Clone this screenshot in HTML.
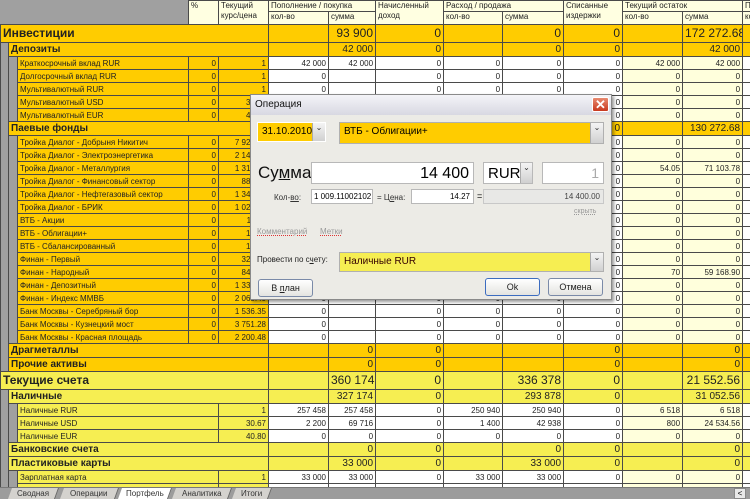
<!DOCTYPE html>
<html><head><meta charset="utf-8">
<style>
*{box-sizing:border-box}
body{margin:0;width:750px;height:499px;overflow:hidden;background:#a0a0a0;font-family:"Liberation Sans",sans-serif;position:relative}
table{position:absolute;left:0;top:0;border-collapse:collapse;table-layout:fixed;width:750px}
td{border:1px solid #4a4a4a;padding:0 2px;font-size:8px;white-space:nowrap;overflow:hidden;height:13px;line-height:11px;color:#222}
td.r{text-align:right}
.g{background:#a0a0a0;border-top:none;border-bottom:none}
.y{background:#ffcc00}
.z{background:#f6ee52}
.w{background:#fff}
.l{background:#ffffdc}
.h{background:#ffffe1;vertical-align:top;line-height:10px;height:10px}
.hg{background:#a0a0a0;border:none}
tr.l1 td{height:14px;font-size:10px;font-weight:bold}
tr.l1 td.r{font-weight:normal}
tr.l0 td{height:18px;font-size:12px;font-weight:bold}
tr.l0 td.r{font-weight:normal}
.dlg{position:absolute;left:250px;top:94px;width:362px;height:206px;background:#ecebe6;border:1px solid #8a8a8a;box-shadow:2px 2px 3px rgba(0,0,0,.4)}
.dlg div{white-space:nowrap}
.tb{position:absolute;left:0;top:0;width:360px;height:20px;background:linear-gradient(#f4f4f8,#d8d8e2);font-size:10px;padding:4px 4px;color:#111}
.x{position:absolute;right:2px;top:2px;width:17px;height:15px;background:linear-gradient(#e88a70,#c8381e);border:1px solid #fff;border-radius:2px;color:#fff;font-size:13px;line-height:13px;text-align:center;font-weight:bold}
.a{position:absolute}
.cb{position:absolute;border:1px solid #b0b0b0;font-size:10px;padding:3px 4px}
.dd{position:absolute;right:0;top:0;bottom:0;width:13px;background:linear-gradient(#f4f4f4,#d0d0d0);border-left:1px solid #aaa;font-size:8px;text-align:center;color:#333}
.in{position:absolute;background:#fff;border:1px solid #b8b8b8}
.bt{position:absolute;height:18px;border:1px solid #7a8aa8;border-radius:3px;background:linear-gradient(#fff,#e4e4e0);font-size:9px;text-align:center;line-height:16px;color:#222}
.tabs{position:absolute;left:0;top:487px;width:750px;height:12px;background:#9c9c9c;border-top:1px solid #777}
.tab{position:absolute;top:0;height:11px;background:#d4d2ce;font-size:8px;line-height:11px;text-align:center;color:#333;border-right:1px solid #666;transform:skewX(-20deg)}
.tab span{display:inline-block;transform:skewX(20deg)}
</style></head><body>
<table>
<colgroup><col style="width:8px"><col style="width:9px"><col style="width:171px"><col style="width:30px"><col style="width:50px"><col style="width:60px"><col style="width:47px"><col style="width:68px"><col style="width:59px"><col style="width:61px"><col style="width:59px"><col style="width:60px"><col style="width:60px"><col style="width:8px"></colgroup>
<tr><td class="hg" colspan="3" rowspan="2"></td><td class="h" rowspan="2">%</td><td class="h" rowspan="2">Текущий<br>курс/цена</td><td class="h" colspan="2">Пополнение / покупка</td><td class="h" rowspan="2">Начисленный<br>доход</td><td class="h" colspan="2">Расход / продажа</td><td class="h" rowspan="2">Списанные<br>издержки</td><td class="h" colspan="2">Текущий остаток</td><td class="h">П</td></tr>
<tr><td class="h" style="height:13px">кол-во</td><td class="h">сумма</td><td class="h">кол-во</td><td class="h">сумма</td><td class="h">кол-во</td><td class="h">сумма</td><td class="h">ко</td></tr>

<tr class="l0"><td class="y" colspan="5">Инвестиции</td><td class="y"></td><td class="y r">93 900</td><td class="y r">0</td><td class="y"></td><td class="y r">0</td><td class="y r">0</td><td class="y"></td><td class="y r">172 272.68</td><td class="y"></td></tr>
<tr class="l1"><td class="g"></td><td class="y" colspan="4">Депозиты</td><td class="y"></td><td class="y r">42 000</td><td class="y r">0</td><td class="y"></td><td class="y r">0</td><td class="y r">0</td><td class="y"></td><td class="y r">42 000</td><td class="y"></td></tr>
<tr><td class="g"></td><td class="g"></td><td class="y">Краткосрочный вклад RUR</td><td class="y r">0</td><td class="y r">1</td><td class="w r">42 000</td><td class="w r">42 000</td><td class="w r">0</td><td class="w r">0</td><td class="w r">0</td><td class="w r">0</td><td class="l r">42 000</td><td class="l r">42 000</td><td class="w"></td></tr>
<tr><td class="g"></td><td class="g"></td><td class="y">Долгосрочный вклад RUR</td><td class="y r">0</td><td class="y r">1</td><td class="w r">0</td><td class="w"></td><td class="w r">0</td><td class="w r">0</td><td class="w r">0</td><td class="w r">0</td><td class="l r">0</td><td class="l r">0</td><td class="w"></td></tr>
<tr><td class="g"></td><td class="g"></td><td class="y">Мультивалютный RUR</td><td class="y r">0</td><td class="y r">1</td><td class="w r">0</td><td class="w"></td><td class="w r">0</td><td class="w r">0</td><td class="w r">0</td><td class="w r">0</td><td class="l r">0</td><td class="l r">0</td><td class="w"></td></tr>
<tr><td class="g"></td><td class="g"></td><td class="y">Мультивалютный USD</td><td class="y r">0</td><td class="y r">30.67</td><td class="w r">0</td><td class="w"></td><td class="w r">0</td><td class="w r">0</td><td class="w r">0</td><td class="w r">0</td><td class="l r">0</td><td class="l r">0</td><td class="w"></td></tr>
<tr><td class="g"></td><td class="g"></td><td class="y">Мультивалютный EUR</td><td class="y r">0</td><td class="y r">40.80</td><td class="w r">0</td><td class="w"></td><td class="w r">0</td><td class="w r">0</td><td class="w r">0</td><td class="w r">0</td><td class="l r">0</td><td class="l r">0</td><td class="w"></td></tr>
<tr class="l1"><td class="g"></td><td class="y" colspan="4">Паевые фонды</td><td class="y"></td><td class="y r">51 900</td><td class="y r">0</td><td class="y"></td><td class="y r">0</td><td class="y r">0</td><td class="y"></td><td class="y r">130 272.68</td><td class="y"></td></tr>
<tr><td class="g"></td><td class="g"></td><td class="y">Тройка Диалог - Добрыня Никитич</td><td class="y r">0</td><td class="y r">7 921.42</td><td class="w r">0</td><td class="w"></td><td class="w r">0</td><td class="w r">0</td><td class="w r">0</td><td class="w r">0</td><td class="l r">0</td><td class="l r">0</td><td class="w"></td></tr>
<tr><td class="g"></td><td class="g"></td><td class="y">Тройка Диалог - Электроэнергетика</td><td class="y r">0</td><td class="y r">2 145.10</td><td class="w r">0</td><td class="w"></td><td class="w r">0</td><td class="w r">0</td><td class="w r">0</td><td class="w r">0</td><td class="l r">0</td><td class="l r">0</td><td class="w"></td></tr>
<tr><td class="g"></td><td class="g"></td><td class="y">Тройка Диалог - Металлургия</td><td class="y r">0</td><td class="y r">1 315.50</td><td class="w r">0</td><td class="w"></td><td class="w r">0</td><td class="w r">0</td><td class="w r">0</td><td class="w r">0</td><td class="l r">54.05</td><td class="l r">71 103.78</td><td class="w"></td></tr>
<tr><td class="g"></td><td class="g"></td><td class="y">Тройка Диалог - Финансовый сектор</td><td class="y r">0</td><td class="y r">885.20</td><td class="w r">0</td><td class="w"></td><td class="w r">0</td><td class="w r">0</td><td class="w r">0</td><td class="w r">0</td><td class="l r">0</td><td class="l r">0</td><td class="w"></td></tr>
<tr><td class="g"></td><td class="g"></td><td class="y">Тройка Диалог - Нефтегазовый сектор</td><td class="y r">0</td><td class="y r">1 345.60</td><td class="w r">0</td><td class="w"></td><td class="w r">0</td><td class="w r">0</td><td class="w r">0</td><td class="w r">0</td><td class="l r">0</td><td class="l r">0</td><td class="w"></td></tr>
<tr><td class="g"></td><td class="g"></td><td class="y">Тройка Диалог - БРИК</td><td class="y r">0</td><td class="y r">1 025.30</td><td class="w r">0</td><td class="w"></td><td class="w r">0</td><td class="w r">0</td><td class="w r">0</td><td class="w r">0</td><td class="l r">0</td><td class="l r">0</td><td class="w"></td></tr>
<tr><td class="g"></td><td class="g"></td><td class="y">ВТБ - Акции</td><td class="y r">0</td><td class="y r">11.40</td><td class="w r">0</td><td class="w"></td><td class="w r">0</td><td class="w r">0</td><td class="w r">0</td><td class="w r">0</td><td class="l r">0</td><td class="l r">0</td><td class="w"></td></tr>
<tr><td class="g"></td><td class="g"></td><td class="y">ВТБ - Облигации+</td><td class="y r">0</td><td class="y r">14.27</td><td class="w r">0</td><td class="w"></td><td class="w r">0</td><td class="w r">0</td><td class="w r">0</td><td class="w r">0</td><td class="l r">0</td><td class="l r">0</td><td class="w"></td></tr>
<tr><td class="g"></td><td class="g"></td><td class="y">ВТБ - Сбалансированный</td><td class="y r">0</td><td class="y r">12.80</td><td class="w r">0</td><td class="w"></td><td class="w r">0</td><td class="w r">0</td><td class="w r">0</td><td class="w r">0</td><td class="l r">0</td><td class="l r">0</td><td class="w"></td></tr>
<tr><td class="g"></td><td class="g"></td><td class="y">Финан - Первый</td><td class="y r">0</td><td class="y r">321.45</td><td class="w r">0</td><td class="w"></td><td class="w r">0</td><td class="w r">0</td><td class="w r">0</td><td class="w r">0</td><td class="l r">0</td><td class="l r">0</td><td class="w"></td></tr>
<tr><td class="g"></td><td class="g"></td><td class="y">Финан - Народный</td><td class="y r">0</td><td class="y r">845.27</td><td class="w r">0</td><td class="w"></td><td class="w r">0</td><td class="w r">0</td><td class="w r">0</td><td class="w r">0</td><td class="l r">70</td><td class="l r">59 168.90</td><td class="w"></td></tr>
<tr><td class="g"></td><td class="g"></td><td class="y">Финан - Депозитный</td><td class="y r">0</td><td class="y r">1 330.10</td><td class="w r">0</td><td class="w"></td><td class="w r">0</td><td class="w r">0</td><td class="w r">0</td><td class="w r">0</td><td class="l r">0</td><td class="l r">0</td><td class="w"></td></tr>
<tr><td class="g"></td><td class="g"></td><td class="y">Финан - Индекс ММВБ</td><td class="y r">0</td><td class="y r">2 065.40</td><td class="w r">0</td><td class="w"></td><td class="w r">0</td><td class="w r">0</td><td class="w r">0</td><td class="w r">0</td><td class="l r">0</td><td class="l r">0</td><td class="w"></td></tr>
<tr><td class="g"></td><td class="g"></td><td class="y">Банк Москвы - Серебряный бор</td><td class="y r">0</td><td class="y r">1 536.35</td><td class="w r">0</td><td class="w"></td><td class="w r">0</td><td class="w r">0</td><td class="w r">0</td><td class="w r">0</td><td class="l r">0</td><td class="l r">0</td><td class="w"></td></tr>
<tr><td class="g"></td><td class="g"></td><td class="y">Банк Москвы - Кузнецкий мост</td><td class="y r">0</td><td class="y r">3 751.28</td><td class="w r">0</td><td class="w"></td><td class="w r">0</td><td class="w r">0</td><td class="w r">0</td><td class="w r">0</td><td class="l r">0</td><td class="l r">0</td><td class="w"></td></tr>
<tr><td class="g"></td><td class="g"></td><td class="y">Банк Москвы - Красная площадь</td><td class="y r">0</td><td class="y r">2 200.48</td><td class="w r">0</td><td class="w"></td><td class="w r">0</td><td class="w r">0</td><td class="w r">0</td><td class="w r">0</td><td class="l r">0</td><td class="l r">0</td><td class="w"></td></tr>
<tr class="l1"><td class="g"></td><td class="y" colspan="4">Драгметаллы</td><td class="y"></td><td class="y r">0</td><td class="y r">0</td><td class="y"></td><td class="y r"></td><td class="y r">0</td><td class="y"></td><td class="y r">0</td><td class="y"></td></tr>
<tr class="l1"><td class="g"></td><td class="y" colspan="4">Прочие активы</td><td class="y"></td><td class="y r">0</td><td class="y r">0</td><td class="y"></td><td class="y r"></td><td class="y r">0</td><td class="y"></td><td class="y r">0</td><td class="y"></td></tr>

<tr class="l0"><td class="z" colspan="5">Текущие счета</td><td class="z"></td><td class="z r">360 174</td><td class="z r">0</td><td class="z"></td><td class="z r">336 378</td><td class="z r">0</td><td class="z"></td><td class="z r">21 552.56</td><td class="z"></td></tr>
<tr class="l1"><td class="g"></td><td class="z" colspan="4">Наличные</td><td class="z"></td><td class="z r">327 174</td><td class="z r">0</td><td class="z"></td><td class="z r">293 878</td><td class="z r">0</td><td class="z"></td><td class="z r">31 052.56</td><td class="z"></td></tr>
<tr><td class="g"></td><td class="g"></td><td class="z" colspan="2">Наличные RUR</td><td class="z r">1</td><td class="w r">257 458</td><td class="w r">257 458</td><td class="w r">0</td><td class="w r">250 940</td><td class="w r">250 940</td><td class="w r">0</td><td class="l r">6 518</td><td class="l r">6 518</td><td class="w"></td></tr>
<tr><td class="g"></td><td class="g"></td><td class="z" colspan="2">Наличные USD</td><td class="z r">30.67</td><td class="w r">2 200</td><td class="w r">69 716</td><td class="w r">0</td><td class="w r">1 400</td><td class="w r">42 938</td><td class="w r">0</td><td class="l r">800</td><td class="l r">24 534.56</td><td class="w"></td></tr>
<tr><td class="g"></td><td class="g"></td><td class="z" colspan="2">Наличные EUR</td><td class="z r">40.80</td><td class="w r">0</td><td class="w r">0</td><td class="w r">0</td><td class="w r">0</td><td class="w r">0</td><td class="w r">0</td><td class="l r">0</td><td class="l r">0</td><td class="w"></td></tr>
<tr class="l1"><td class="g"></td><td class="z" colspan="4">Банковские счета</td><td class="z"></td><td class="z r">0</td><td class="z r">0</td><td class="z"></td><td class="z r">0</td><td class="z r">0</td><td class="z"></td><td class="z r">0</td><td class="z"></td></tr>
<tr class="l1"><td class="g"></td><td class="z" colspan="4">Пластиковые карты</td><td class="z"></td><td class="z r">33 000</td><td class="z r">0</td><td class="z"></td><td class="z r">33 000</td><td class="z r">0</td><td class="z"></td><td class="z r">0</td><td class="z"></td></tr>
<tr><td class="g"></td><td class="g"></td><td class="z" colspan="2">Зарплатная карта</td><td class="z r">1</td><td class="w r">33 000</td><td class="w r">33 000</td><td class="w r">0</td><td class="w r">33 000</td><td class="w r">33 000</td><td class="w r">0</td><td class="l r">0</td><td class="l r">0</td><td class="w"></td></tr>
<tr><td class="g"></td><td class="g"></td><td class="z" colspan="2"></td><td class="z r"></td><td class="w"></td><td class="w"></td><td class="w"></td><td class="w"></td><td class="w"></td><td class="w"></td><td class="l"></td><td class="l"></td><td class="w"></td></tr>
</table>

<div class="dlg">
 <div class="tb">Операция<div class="x">✕</div></div>
 <div class="cb" style="left:6px;top:27px;width:69px;height:20px;background:#ffcc00;border-color:#fff">31.10.2010<div class="dd">⌄</div></div>
 <div class="cb" style="left:88px;top:27px;width:265px;height:22px;background:#ffcc00">ВТБ - Облигации+<div class="dd">⌄</div></div>
 <div class="a" style="left:7px;top:68px;font-size:17px;color:#111">Су<u>м</u>ма:</div>
 <div class="in" style="left:60px;top:67px;width:163px;height:22px;font-size:16px;text-align:right;padding:2px 4px">14 400</div>
 <div class="in" style="left:232px;top:67px;width:50px;height:22px;font-size:15px;padding:2px 4px">RUR<div class="dd" style="width:12px">⌄</div></div>
 <div class="in" style="left:291px;top:67px;width:62px;height:22px;font-size:14px;text-align:right;padding:2px 4px;color:#aaa">1</div>
 <div class="a" style="left:23px;top:98px;font-size:8px;color:#333">Кол-<u>во</u>:</div>
 <div class="in" style="left:60px;top:94px;width:62px;height:15px;font-size:8px;padding:2px 2px;overflow:hidden">1 009.11002102</div>
 <div class="a" style="left:126px;top:98px;font-size:8px;color:#333">= Ц<u>е</u>на:</div>
 <div class="in" style="left:160px;top:94px;width:63px;height:15px;font-size:8px;padding:2px 3px;text-align:right">14.27</div>
 <div class="a" style="left:226px;top:96px;font-size:9px">=</div>
 <div class="a" style="left:232px;top:94px;width:121px;height:15px;border:1px solid #c8c8c8;background:#e8e8e6;font-size:8px;text-align:right;padding:2px 3px;color:#444">14 400.00</div>
 <div class="a" style="left:323px;top:113px;font-size:7px;color:#999;text-decoration:underline dotted">скрыть</div>
 <div class="a" style="left:6px;top:132px;font-size:8px;color:#999;text-decoration:underline dotted #d33">Комментарий</div>
 <div class="a" style="left:69px;top:132px;font-size:8px;color:#999;text-decoration:underline dotted #d33">Метки</div>
 <div class="a" style="left:6px;top:160px;font-size:8px;color:#222">Провести по с<u>ч</u>ету:</div>
 <div class="cb" style="left:88px;top:157px;width:265px;height:20px;background:#f6ee52;color:#300">Наличные RUR<div class="dd">⌄</div></div>
 <div class="bt" style="left:7px;top:184px;width:55px">В <u>п</u>лан</div>
 <div class="bt" style="left:234px;top:183px;width:55px;border-color:#3c6cc0">Ok</div>
 <div class="bt" style="left:297px;top:183px;width:55px">Отмена</div>
</div>

<div class="tabs">
 <div class="tab" style="left:10px;width:47px"><span>Сводная</span></div>
 <div class="tab" style="left:62px;width:55px"><span>Операции</span></div>
 <div class="tab" style="left:120px;width:50px;background:#fff"><span>Портфель</span></div>
 <div class="tab" style="left:174px;width:56px"><span>Аналитика</span></div>
 <div class="tab" style="left:234px;width:36px"><span>Итоги</span></div>
 <div class="a" style="left:734px;top:0;width:12px;height:11px;background:#e8e8e8;border:1px solid #888;font-size:8px;line-height:9px;text-align:center">&lt;</div>
</div>
</body></html>
